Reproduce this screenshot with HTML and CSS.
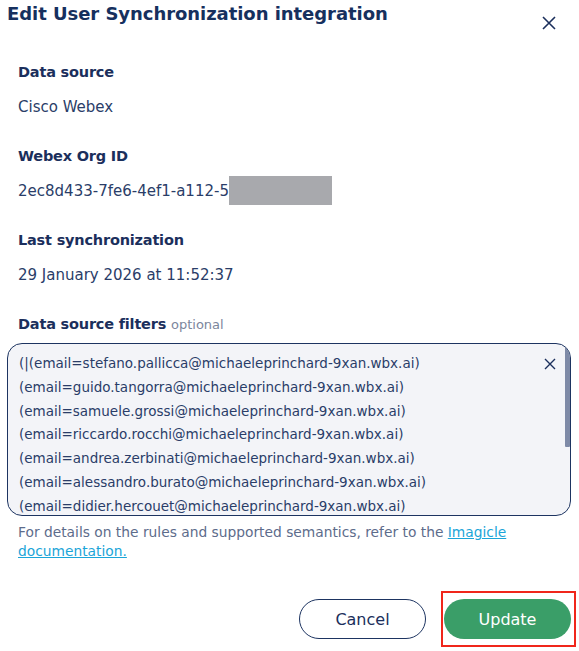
FILE: index.html
```html
<!DOCTYPE html>
<html lang="en">
<head>
<meta charset="utf-8">
<title>Edit User Synchronization integration</title>
<link rel="stylesheet" href="styles.css">
</head>
<body>
<div class="dialog">
  <div class="header">
    <h1 class="title">Edit User Synchronization integration</h1>
    <button class="close" aria-label="Close">
      <svg width="14" height="14" viewBox="0 0 14 14"><path d="M1 1L13 13M13 1L1 13" stroke="#1b2f5c" stroke-width="1.6" fill="none"/></svg>
    </button>
  </div>
  <div class="body">
    <div class="field">
      <div class="label">Data source</div>
      <div class="value">Cisco Webex</div>
    </div>
    <div class="field">
      <div class="label">Webex Org ID</div>
      <div class="value">2ec8d433-7fe6-4ef1-a112-5<span class="redact"></span></div>
    </div>
    <div class="field">
      <div class="label">Last synchronization</div>
      <div class="value">29 January 2026 at 11:52:37</div>
    </div>
    <div class="label filters-label">Data source filters <span class="optional">optional</span></div>
  </div>
  <div class="filters">
    <div class="filters-text">
      <div>(|(email=stefano.pallicca@michaeleprinchard-9xan.wbx.ai)</div>
      <div>(email=guido.tangorra@michaeleprinchard-9xan.wbx.ai)</div>
      <div>(email=samuele.grossi@michaeleprinchard-9xan.wbx.ai)</div>
      <div>(email=riccardo.rocchi@michaeleprinchard-9xan.wbx.ai)</div>
      <div>(email=andrea.zerbinati@michaeleprinchard-9xan.wbx.ai)</div>
      <div>(email=alessandro.burato@michaeleprinchard-9xan.wbx.ai)</div>
      <div>(email=didier.hercouet@michaeleprinchard-9xan.wbx.ai)</div>
    </div>
    <button class="clear" aria-label="Clear">
      <svg width="12" height="12" viewBox="0 0 12 12"><path d="M1 1L11 11M11 1L1 11" stroke="#1b2f5c" stroke-width="1.4" fill="none"/></svg>
    </button>
    <div class="scroll-thumb"></div>
  </div>
  <p class="help">For details on the rules and supported semantics, refer to the <a href="#">Imagicle</a><br><a href="#">documentation.</a></p>
  <div class="actions">
    <button class="btn btn-cancel">Cancel</button>
    <button class="btn btn-update">Update</button>
  </div>
</div>
</body>
</html>
```
FILE: styles.css
```css
* { box-sizing: border-box; }
html, body { margin: 0; padding: 0; background: #ffffff; }
body {
  font-family: "DejaVu Sans", "Liberation Sans", sans-serif;
  color: #1b2f5c;
  width: 579px;
  height: 651px;
  overflow: hidden;
}
.dialog { display: flex; flex-direction: column; }
.header {
  display: flex;
  justify-content: space-between;
  align-items: flex-start;
  padding: 0 23px 0 7px;
  height: 62px;
}
.title {
  margin: 0;
  font-size: 18px;
  font-weight: bold;
  line-height: 28px;
  color: #16305e;
  letter-spacing: -0.05px;
}
.close {
  margin-top: 16px;
  padding: 0;
  border: 0;
  background: none;
  width: 14px;
  height: 14px;
  display: flex;
}
.body { padding: 0 18px; }
.field { margin-bottom: 29px; }
.label {
  font-size: 14.5px;
  font-weight: bold;
  letter-spacing: -0.2px;
  line-height: 20px;
  color: #1b2f5c;
}
.value {
  margin-top: 15px;
  font-size: 15px;
  line-height: 20px;
  height: 20px;
  color: #2a3d68;
  display: flex;
  align-items: center;
}
.redact {
  display: block;
  flex: none;
  width: 103px;
  height: 29px;
  margin-top: -1px;
  background: #a8a9ad;
}
.optional {
  font-weight: normal;
  font-size: 13px;
  letter-spacing: 0;
  color: #7b869c;
}
.filters-label { margin-bottom: 8px; }
.filters {
  position: relative;
  margin: 0 8px 0 7px;
  height: 173px;
  border: 1px solid #1d3461;
  border-radius: 15px;
  background: #f3f4f8;
  overflow: hidden;
}
.filters-text {
  padding: 8px 11px 0;
  font-size: 13.5px;
  line-height: 23.8px;
  color: #2a3d68;
  white-space: nowrap;
}
.clear {
  position: absolute;
  top: 14px;
  right: 14px;
  padding: 0;
  border: 0;
  background: none;
  width: 12px;
  height: 12px;
  display: flex;
}
.scroll-thumb {
  position: absolute;
  top: 1px;
  right: 0;
  width: 5px;
  height: 102px;
  background: #7e8aa7;
  border-radius: 1px;
}
.help {
  margin: 7px 20px 0 18px;
  font-size: 13.8px;
  line-height: 19px;
  color: #5d6c8b;
}
.help a { color: #1ba5d8; }
.actions {
  display: flex;
  justify-content: flex-end;
  gap: 18px;
  padding: 38px 8px 0 0;
}
.btn {
  width: 127px;
  height: 40px;
  border-radius: 20px;
  font-family: inherit;
  font-size: 16px;
  font-weight: 500;
  cursor: pointer;
}
.btn-cancel {
  background: #ffffff;
  border: 1px solid #1d3461;
  color: #1b2f5c;
}
.btn-update {
  position: relative;
  background: #3a9e68;
  border: 0;
  color: #ffffff;
}
.btn-update::after {
  content: "";
  position: absolute;
  top: -8px;
  bottom: -8px;
  left: -3px;
  right: -5px;
  border: 2px solid #f0261b;
}
```
